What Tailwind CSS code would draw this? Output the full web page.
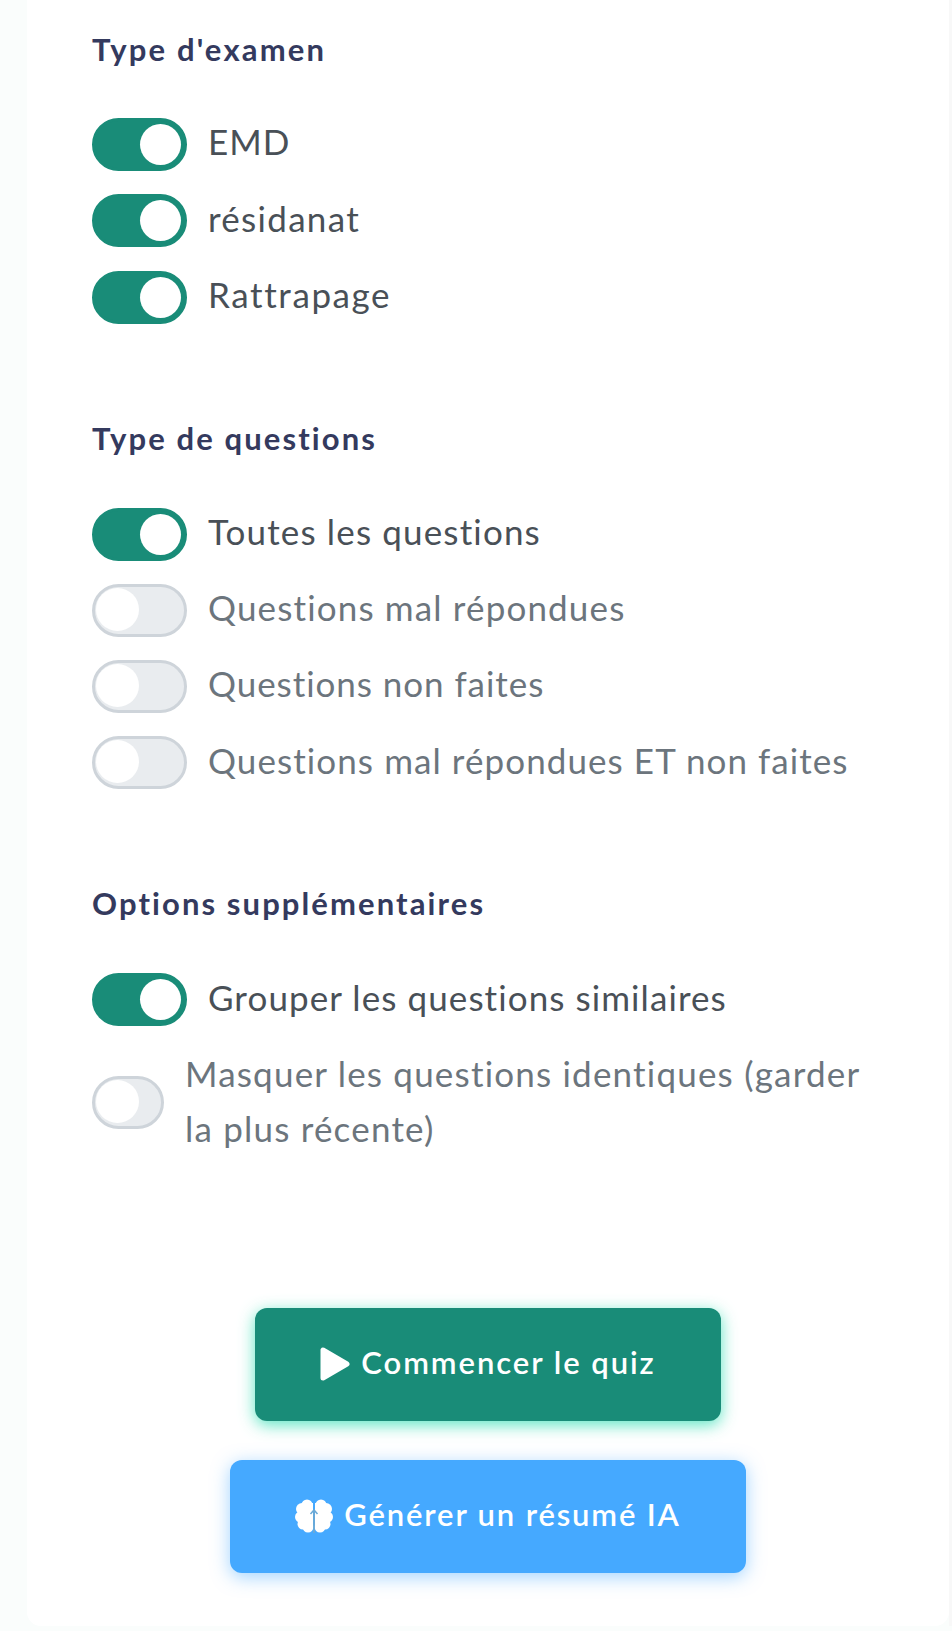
<!DOCTYPE html>
<html lang="fr">
<head>
<meta charset="UTF-8">
<title>Quiz</title>
<script src="https://cdn.jsdelivr.net/npm/@tailwindcss/browser@4"></script>
</head>
<body class="bg-[#fafdfc] font-['Lato','Noto_Sans',sans-serif]">
<div class="h-[1631px] w-[952px] overflow-hidden">
  <div class="flex h-[1626px]">
    <div class="ml-[27px] w-[922px] h-full bg-white rounded-b-[14px] pl-[65px] pt-[27px]">

      <!-- Type d'examen -->
      <h2 class="h-[44px] leading-[44px] text-[31px] font-bold tracking-[2.2px] text-[#343a5e]">Type d'examen</h2>
      <div class="mt-[47px] flex flex-col gap-[23.3px]">
        <div class="flex items-center h-[53px]">
          <span class="relative block w-[95px] h-[53px] rounded-full bg-[#198c78] border-[3px] border-[#198c78]"><span class="absolute right-[3px] top-[3px] w-[41px] h-[41px] rounded-full bg-white"></span></span>
          <span class="ml-[21px] -mt-[6px] text-[35px] text-[#495057] tracking-[1.05px]">EMD</span>
        </div>
        <div class="flex items-center h-[53px]">
          <span class="relative block w-[95px] h-[53px] rounded-full bg-[#198c78] border-[3px] border-[#198c78]"><span class="absolute right-[3px] top-[3px] w-[41px] h-[41px] rounded-full bg-white"></span></span>
          <span class="ml-[21px] -mt-[6px] text-[35px] text-[#495057] tracking-[1.3px]">résidanat</span>
        </div>
        <div class="flex items-center h-[53px]">
          <span class="relative block w-[95px] h-[53px] rounded-full bg-[#198c78] border-[3px] border-[#198c78]"><span class="absolute right-[3px] top-[3px] w-[41px] h-[41px] rounded-full bg-white"></span></span>
          <span class="ml-[21px] -mt-[6px] text-[35px] text-[#495057] tracking-[1.6px]">Rattrapage</span>
        </div>
      </div>

      <!-- Type de questions -->
      <h2 class="mt-[92px] h-[44px] leading-[44px] text-[31px] font-bold tracking-[2.1px] text-[#343a5e]">Type de questions</h2>
      <div class="mt-[48px] flex flex-col gap-[23.3px]">
        <div class="flex items-center h-[53px]">
          <span class="relative block w-[95px] h-[53px] rounded-full bg-[#198c78] border-[3px] border-[#198c78]"><span class="absolute right-[3px] top-[3px] w-[41px] h-[41px] rounded-full bg-white"></span></span>
          <span class="ml-[21px] -mt-[6px] text-[35px] text-[#495057] tracking-[1.15px]">Toutes les questions</span>
        </div>
        <div class="flex items-center h-[53px]">
          <span class="relative block w-[95px] h-[53px] rounded-full bg-[#e9ecef] border-[3px] border-[#ced4da]"><span class="absolute left-[1px] top-[1px] w-[43px] h-[43px] rounded-full bg-white"></span></span>
          <span class="ml-[21px] -mt-[6px] text-[35px] text-[#6c757d] tracking-[1.15px]">Questions mal répondues</span>
        </div>
        <div class="flex items-center h-[53px]">
          <span class="relative block w-[95px] h-[53px] rounded-full bg-[#e9ecef] border-[3px] border-[#ced4da]"><span class="absolute left-[1px] top-[1px] w-[43px] h-[43px] rounded-full bg-white"></span></span>
          <span class="ml-[21px] -mt-[6px] text-[35px] text-[#6c757d] tracking-[0.95px]">Questions non faites</span>
        </div>
        <div class="flex items-center h-[53px]">
          <span class="relative block w-[95px] h-[53px] rounded-full bg-[#e9ecef] border-[3px] border-[#ced4da]"><span class="absolute left-[1px] top-[1px] w-[43px] h-[43px] rounded-full bg-white"></span></span>
          <span class="ml-[21px] -mt-[6px] text-[35px] text-[#6c757d] tracking-[1.08px]">Questions mal répondues ET non faites</span>
        </div>
      </div>

      <!-- Options -->
      <h2 class="mt-[92px] h-[44px] leading-[44px] text-[31px] font-bold tracking-[2.1px] text-[#343a5e]">Options supplémentaires</h2>
      <div class="mt-[48px] flex flex-col gap-[23.3px]">
        <div class="flex items-center h-[53px]">
          <span class="relative block w-[95px] h-[53px] rounded-full bg-[#198c78] border-[3px] border-[#198c78]"><span class="absolute right-[3px] top-[3px] w-[41px] h-[41px] rounded-full bg-white"></span></span>
          <span class="ml-[21px] -mt-[6px] text-[35px] text-[#495057] tracking-[1.08px]">Grouper les questions similaires</span>
        </div>
        <div class="flex items-center">
          <span class="relative block shrink-0 w-[72px] h-[53px] rounded-full bg-[#e9ecef] border-[3px] border-[#ced4da]"><span class="absolute left-[1px] top-[1px] w-[43px] h-[43px] rounded-full bg-white"></span></span>
          <span class="ml-[21px] -mt-[4px] w-[700px] text-[35px] leading-[55px] text-[#6c757d] tracking-[1.2px]">Masquer les questions identiques (garder la plus récente)</span>
        </div>
      </div>

      <!-- Buttons -->
      <div class="mt-[152px] ml-[138px] w-[516px] flex flex-col items-center gap-[39px]">
        <button class="flex items-center justify-center gap-[11px] w-[466px] h-[113px] rounded-[12px] bg-[#198c78] text-white text-[31px] font-semibold tracking-[1.95px] shadow-[0_4px_16px_rgba(64,224,185,0.85)]">
          <svg class="w-[30px] h-[34px]" viewBox="0 0 30 34"><polygon points="3,3 3,31 27,17" fill="#fff" stroke="#fff" stroke-width="5" stroke-linejoin="round"/></svg>
          <span class="-mt-[4px]">Commencer le quiz</span>
        </button>
        <button class="flex items-center justify-center gap-[11px] w-[516px] h-[113px] rounded-[12px] bg-[#45a9ff] text-white text-[31px] font-semibold tracking-[1.85px] shadow-[0_4px_18px_rgba(69,169,255,0.5)]">
          <svg class="w-[38px] h-[34px]" viewBox="0 0 38 34">
            <g fill="#fff">
              <circle cx="12" cy="6" r="5.5"/><circle cx="7" cy="10" r="6"/><circle cx="5.5" cy="18" r="5.5"/><circle cx="8" cy="25" r="5.5"/><circle cx="13" cy="28" r="5.5"/><rect x="8" y="4" width="10" height="26"/>
              <circle cx="26" cy="6" r="5.5"/><circle cx="31" cy="10" r="6"/><circle cx="32.5" cy="18" r="5.5"/><circle cx="30" cy="25" r="5.5"/><circle cx="25" cy="28" r="5.5"/><rect x="20" y="4" width="10" height="26"/>
            </g>
            <path d="M19 34V11" fill="none" stroke="#6aa9d6" stroke-width="1.8"/>
            <path d="M15.5 15 19 11l3.5 4" fill="none" stroke="#6aa9d6" stroke-width="1.5"/>
          </svg>
          <span class="-mt-[4px]">Générer un résumé IA</span>
        </button>
      </div>
    </div>
    <div class="w-[3px] h-full bg-[#f8f8f8]"></div>
  </div>
</div>
</body>
</html>
